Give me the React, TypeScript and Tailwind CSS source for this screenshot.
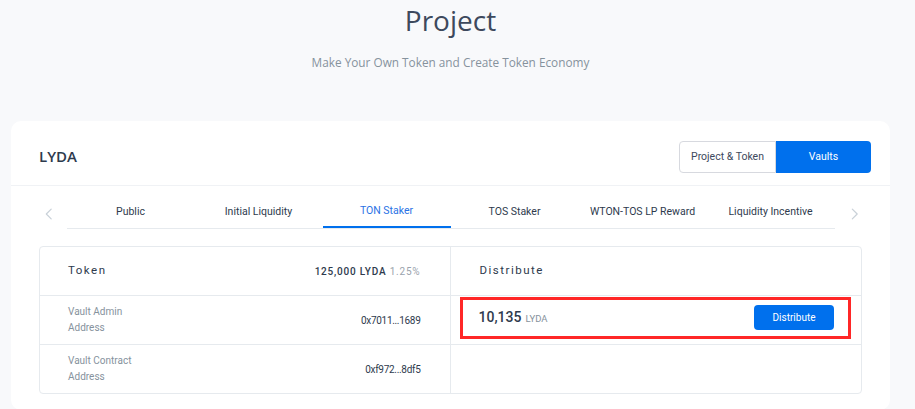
import React from "react";
import { ChevronLeft, ChevronRight } from "lucide-react";

const tabs = [
  "Public",
  "Initial Liquidity",
  "TON Staker",
  "TOS Staker",
  "WTON-TOS LP Reward",
  "Liquidity Incentive",
];

const ACTIVE = "TON Staker";

export default function App() {
  return (
    <div className="min-h-[409px] w-[915px] bg-[#f8f9fb] font-['Open_Sans',sans-serif] text-[#3d495d]">
      <div className="ml-[11px] w-[879px]">
        {/* Page title */}
        <div className="flex flex-col items-center">
          <h1 className="text-[28px] leading-[40px] font-normal text-[#3d495d]">Project</h1>
          <p className="mt-[14px] text-[11.8px] leading-[16px] text-[#86929d]">
            Make Your Own Token and Create Token Economy
          </p>
        </div>

        {/* Card */}
        <div className="mt-[51px] rounded-[10px] bg-white pb-[16px]">
          {/* Header */}
          <div className="flex h-[65px] items-center justify-between border-b border-[#f0f2f5] pl-[28px] pr-[19px]">
            <span className="mt-[6px] text-[15px] font-semibold text-[#2e3a4d]">LYDA</span>
            <div className="mt-[7px] flex h-[32px] font-['Roboto',sans-serif] text-[10.5px]">
              <button className="w-[97px] rounded-l-[4px] border border-[#d7d9df] bg-white text-[#3d495d]">
                Project &amp; Token
              </button>
              <button className="w-[95px] rounded-r-[4px] bg-[#0070ed] text-white">Vaults</button>
            </div>
          </div>

          {/* Tabs */}
          <div className="flex items-center pl-[28px] pr-[26px] pt-[9px] font-['Roboto',sans-serif]">
            <ChevronLeft className="mt-[4px] h-[20px] w-[20px] text-[#c9d1d8]" strokeWidth={1.5} />
            <div className="ml-[8px] flex flex-1 border-b border-[#e6eaee]">
              {tabs.map((t) => (
                <div
                  key={t}
                  className={
                    t === ACTIVE
                      ? "-mb-px flex h-[33px] w-[128px] items-center justify-center border-b-2 border-[#0070ed] text-[10.5px] text-[#2a72e5]"
                      : "flex h-[33px] w-[128px] items-center justify-center text-[10.5px] text-[#2e3a4d]"
                  }
                >
                  {t}
                </div>
              ))}
            </div>
            <ChevronRight className="ml-[10px] mt-[4px] h-[20px] w-[20px] text-[#c9d1d8]" strokeWidth={1.5} />
          </div>

          {/* Table */}
          <div className="mx-[28px] mt-[17px] grid grid-cols-2 overflow-hidden rounded-[4px] border border-[#e6eaee] font-['Roboto',sans-serif]">
            <div className="flex h-[49px] items-center justify-between border-r border-b border-[#e6eaee] pl-[28px] pr-[29px]">
              <span className="text-[11.5px] tracking-[1.5px] text-[#2e3a4d]">Token</span>
              <span className="text-[10px] font-medium tracking-[0.8px] text-[#2e3a4d]">
                125,000 LYDA <span className="font-normal text-[#9aa3ad]">1.25%</span>
              </span>
            </div>
            <div className="flex h-[49px] items-center border-b border-[#e6eaee] pl-[29px]">
              <span className="text-[11.5px] tracking-[1.5px] text-[#2e3a4d]">Distribute</span>
            </div>

            <div className="flex h-[49px] items-center justify-between border-r border-b border-[#e6eaee] pl-[28px] pr-[29px]">
              <div className="text-[10px] leading-[16px] text-[#86929d]">
                <div>Vault Admin</div>
                <div>Address</div>
              </div>
              <span className="text-[10px] tracking-[-0.3px] text-[#2e3a4d]">0x7011...1689</span>
            </div>
            <div className="relative flex h-[49px] items-center justify-between border-b border-[#e6eaee] pb-[6px] pl-[28px] pr-[27px]">
              <div className="flex items-baseline gap-[4px]">
                <span className="text-[14px] font-medium text-[#2e3a4d]">10,135</span>
                <span className="text-[9.5px] text-[#86929d]">LYDA</span>
              </div>
              <button className="h-[25px] w-[80px] rounded-[4px] bg-[#0070ed] text-[10px] text-white">
                Distribute
              </button>
              <div className="pointer-events-none absolute left-[9px] top-[1px] h-[42px] w-[391px] border-[3px] border-[#ff2727]" />
            </div>

            <div className="flex h-[48px] items-center justify-between border-r border-[#e6eaee] pl-[28px] pr-[29px]">
              <div className="text-[10px] leading-[16px] text-[#86929d]">
                <div>Vault Contract</div>
                <div>Address</div>
              </div>
              <span className="text-[10px] tracking-[-0.3px] text-[#2e3a4d]">0xf972...8df5</span>
            </div>
            <div className="h-[48px]" />
          </div>
        </div>
      </div>
    </div>
  );
}
